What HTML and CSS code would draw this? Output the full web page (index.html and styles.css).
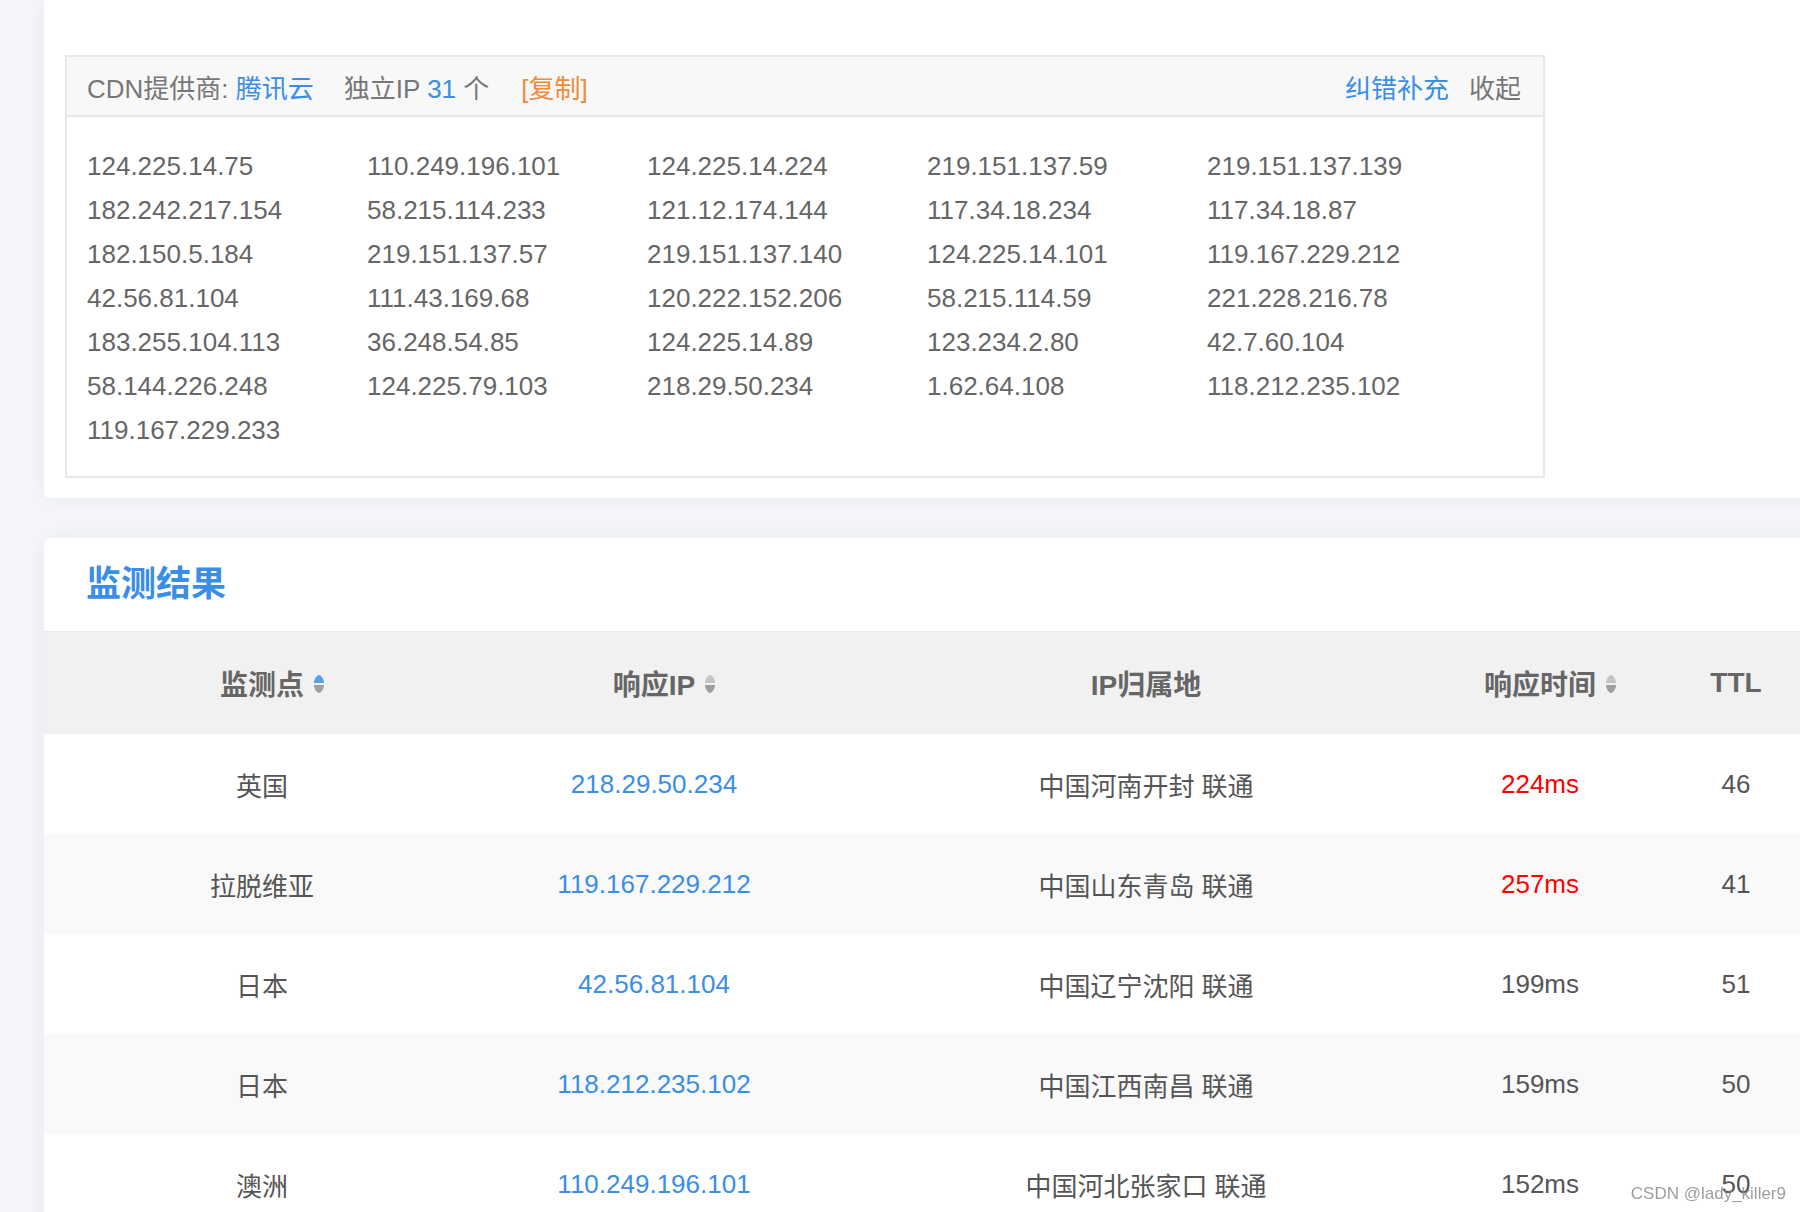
FILE: index.html
```html
<!DOCTYPE html>
<html lang="zh-CN">
<head>
<meta charset="utf-8">
<title>CDN 监测结果</title>
<link rel="stylesheet" href="styles.css">
</head>
<body>
<div class="page">
  <section class="card card-top">
    <div class="cdn-box">
      <div class="cdn-head">
        <div class="cdn-info">
          <span class="item">CDN提供商: <span class="blue">腾讯云</span></span>
          <span class="item">独立IP <span class="blue">31</span> 个</span>
          <span class="item orange">[复制]</span>
        </div>
        <div class="cdn-actions">
          <span class="blue">纠错补充</span>
          <span class="gray">收起</span>
        </div>
      </div>
      <div class="ip-grid">
        <span>124.225.14.75</span><span>110.249.196.101</span><span>124.225.14.224</span><span>219.151.137.59</span><span>219.151.137.139</span>
        <span>182.242.217.154</span><span>58.215.114.233</span><span>121.12.174.144</span><span>117.34.18.234</span><span>117.34.18.87</span>
        <span>182.150.5.184</span><span>219.151.137.57</span><span>219.151.137.140</span><span>124.225.14.101</span><span>119.167.229.212</span>
        <span>42.56.81.104</span><span>111.43.169.68</span><span>120.222.152.206</span><span>58.215.114.59</span><span>221.228.216.78</span>
        <span>183.255.104.113</span><span>36.248.54.85</span><span>124.225.14.89</span><span>123.234.2.80</span><span>42.7.60.104</span>
        <span>58.144.226.248</span><span>124.225.79.103</span><span>218.29.50.234</span><span>1.62.64.108</span><span>118.212.235.102</span>
        <span>119.167.229.233</span>
      </div>
    </div>
  </section>

  <section class="card card-result">
    <h2 class="title">监测结果</h2>
    <table class="result">
      <colgroup>
        <col class="c1"><col class="c2"><col class="c3"><col class="c4"><col class="c5">
      </colgroup>
      <thead>
        <tr>
          <th><span class="th-label">监测点<svg class="sort" viewBox="0 0 12 20" width="12" height="20"><path class="up active" d="M1 9 C1 5 4 1 6 1 C8 1 11 5 11 9 Z"/><path class="down" d="M1 11 C1 15 4 19 6 19 C8 19 11 15 11 11 Z"/></svg></span></th>
          <th><span class="th-label">响应IP<svg class="sort" viewBox="0 0 12 20" width="12" height="20"><path class="up" d="M1 9 C1 5 4 1 6 1 C8 1 11 5 11 9 Z"/><path class="down" d="M1 11 C1 15 4 19 6 19 C8 19 11 15 11 11 Z"/></svg></span></th>
          <th><span class="th-label">IP归属地</span></th>
          <th><span class="th-label">响应时间<svg class="sort" viewBox="0 0 12 20" width="12" height="20"><path class="up" d="M1 9 C1 5 4 1 6 1 C8 1 11 5 11 9 Z"/><path class="down" d="M1 11 C1 15 4 19 6 19 C8 19 11 15 11 11 Z"/></svg></span></th>
          <th><span class="th-label">TTL</span></th>
        </tr>
      </thead>
      <tbody>
        <tr><td>英国</td><td class="ip">218.29.50.234</td><td>中国河南开封 联通</td><td class="red">224ms</td><td>46</td></tr>
        <tr><td>拉脱维亚</td><td class="ip">119.167.229.212</td><td>中国山东青岛 联通</td><td class="red">257ms</td><td>41</td></tr>
        <tr><td>日本</td><td class="ip">42.56.81.104</td><td>中国辽宁沈阳 联通</td><td>199ms</td><td>51</td></tr>
        <tr><td>日本</td><td class="ip">118.212.235.102</td><td>中国江西南昌 联通</td><td>159ms</td><td>50</td></tr>
        <tr><td>澳洲</td><td class="ip">110.249.196.101</td><td>中国河北张家口 联通</td><td>152ms</td><td>50</td></tr>
      </tbody>
    </table>
  </section>
</div>
<div class="watermark">CSDN @lady_killer9</div>
</body>
</html>
```
FILE: styles.css
```css
html, body {
  margin: 0;
  padding: 0;
  overflow: hidden;
  height: 100%;
}
body {
  background: #f4f6f9;
  font-family: "Liberation Sans", "Noto Sans CJK SC", sans-serif;
  color: #666;
}
.page {
  margin-left: 44px;
  width: 1830px;
}
.card {
  background: #fff;
  box-shadow: 0 0 24px rgba(30, 50, 80, 0.06);
}
.card-top {
  padding: 55px 0 20px 21px;
  border-radius: 0 0 6px 6px;
}
.cdn-box {
  width: 1476px;
  border: 2px solid #e8e8e8;
}
.cdn-head {
  height: 58px;
  background: #f8f8f8;
  border-bottom: 2px solid #e8e8e8;
  display: flex;
  align-items: center;
  justify-content: space-between;
  padding: 0 22px 0 20px;
  font-size: 26px;
  color: #777;
}
.cdn-info {
  display: flex;
  gap: 30px;
}
.cdn-info .item:nth-child(3) {
  margin-left: 2px;
}
.cdn-actions {
  display: flex;
  gap: 20px;
}
.blue { color: #3a8ee6; }
.orange { color: #f08a3c; }
.gray { color: #777; }
.ip-grid {
  display: grid;
  grid-template-columns: repeat(5, 280px);
  padding: 27px 20px 24px;
  font-size: 26px;
  line-height: 44px;
  color: #666;
}
.card-result {
  margin-top: 40px;
  border-radius: 8px 0 0 0;
}
.title {
  margin: 0;
  height: 93px;
  line-height: 91px;
  padding-left: 42px;
  font-size: 35px;
  font-weight: bold;
  color: #3a8ee6;
  border-bottom: 1px solid #ececec;
  box-sizing: content-box;
}
.result {
  border-collapse: collapse;
  table-layout: fixed;
  width: 1812px;
}
.c1 { width: 436px; }
.c2 { width: 348px; }
.c3 { width: 636px; }
.c4 { width: 152px; }
.c5 { width: 240px; }
.result th {
  height: 102px;
  background: #f1f1f1;
  font-size: 28px;
  font-weight: bold;
  color: #666;
  text-align: center;
  padding: 0;
  white-space: nowrap;
}
.th-label {
  position: relative;
  display: inline-block;
}
.result td {
  height: 100px;
  font-size: 26px;
  color: #555;
  text-align: center;
  padding: 0;
  white-space: nowrap;
}
.result tbody tr:nth-child(even) td {
  background: #f9f9f9;
}
.result td.ip { color: #3a8ee6; }
.result td.red { color: #ff0000; }
.sort {
  position: absolute;
  left: 100%;
  top: 50%;
  margin-top: -9px;
  margin-left: 9px;
}
.sort .up { fill: #c4c4c4; }
.sort .down { fill: #a0a0a0; }
.sort .up.active { fill: #5a9de8; }
.watermark {
  position: fixed;
  right: 14px;
  bottom: 8px;
  font-family: "Liberation Sans", sans-serif;
  font-size: 17px;
  color: rgba(140, 140, 140, 0.85);
}
```
